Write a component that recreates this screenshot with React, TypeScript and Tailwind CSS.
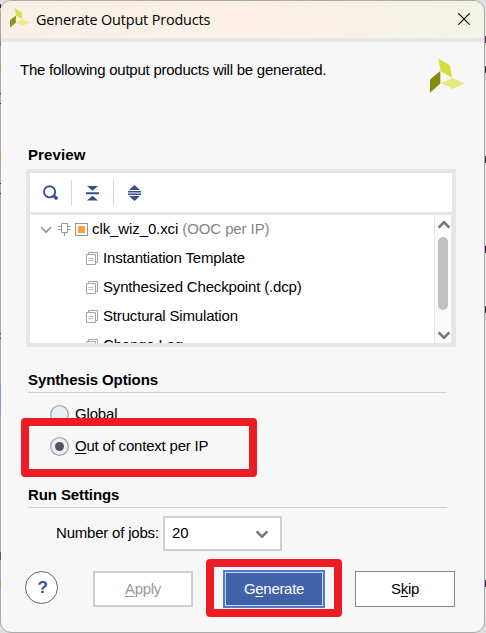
import type { ReactNode } from "react";

function Logo({ className, soft }: { className: string; soft?: boolean }) {
  return (
    <svg className={className} viewBox="0 0 35 35" opacity={soft ? 0.9 : 1}>
      <path d="M8.3 0.3 L20 7.6 L22 20 L10.7 13 Z" fill="#d5e03a" />
      <path d="M0 21.6 L10.3 13 L10.3 25.6 L0 34.7 Z" fill="#878a0c" />
      <path d="M11 25.3 L22.3 20 L34.5 25.3 L23 31 Z" fill="#e4eb7c" />
    </svg>
  );
}

function Chevron({ className, up }: { className: string; up?: boolean }) {
  return (
    <svg className={className} viewBox="0 0 14 9" fill="none" stroke="#777" strokeWidth="2.7">
      <path d={up ? "M1.6 7.6 L7 2.3 L12.4 7.6" : "M1.6 1.4 L7 6.7 L12.4 1.4"} />
    </svg>
  );
}

function Pages() {
  return (
    <svg className="mr-[5px] h-[13px] w-3 shrink-0" viewBox="0 0 12 13" fill="none" stroke="#a3a3a3">
      <path d="M2.5 2.5 V0.5 H11.5 V10.5 H9.5" />
      <path d="M0.5 2.5 H9.5 V12.5 H0.5 Z" fill="#fff" />
      <path d="M2.5 6.5 H7.5 M2.5 8.5 H7.5" stroke="#bdbdbd" />
    </svg>
  );
}

function Heading({ children }: { children: ReactNode }) {
  return (
    <div className="h-[23px] w-[419px] border-b border-[#cfcfcf] text-[15px] leading-[20px] font-bold tracking-[-0.1px]">
      {children}
    </div>
  );
}

function Radio({ on }: { on?: boolean }) {
  return (
    <svg className="mr-1.5 h-[19px] w-[19px]" viewBox="0 0 19 19">
      <circle cx="9.5" cy="9.5" r="8.8" fill="#e7effc" stroke="#a6a6a6" strokeWidth="1.3" />
      {on && <circle cx="9.5" cy="9.5" r="4.5" fill="#555" />}
    </svg>
  );
}

const files = ["Instantiation Template", "Synthesized Checkpoint (.dcp)", "Structural Simulation", "Change Log"];

const leftMarks = [
  { y: 4, h: 4, color: "#2b3560" },
  { y: 34, h: 7, color: "#c99a4c" },
  { y: 41, h: 5, color: "#858585" },
  { y: 64, h: 7, color: "#c99a4c" },
  { y: 93, h: 1, color: "#333" },
  { y: 103, h: 1, color: "#333" },
  { y: 154, h: 7, color: "#c99a4c" },
  { y: 183, h: 1, color: "#333" },
  { y: 193, h: 1, color: "#333" },
  { y: 333, h: 1, color: "#333" },
  { y: 338, h: 1, color: "#333" },
  { y: 384, h: 31, color: "#8d9dc0" },
  { y: 552, h: 8, color: "#4a6573" },
  { y: 582, h: 4, color: "#c98f4c" },
];

const rightMarks = [36, 66, 156, 246, 306, 580];

export default function App() {
  return (
    <div className="relative h-[633px] w-[486px] overflow-hidden bg-[#dedede] font-['Liberation_Sans',Arial,sans-serif] text-[15px] tracking-[-0.17px] text-black">
      <div className="flex h-[633px] w-[485px] flex-col overflow-hidden rounded-[11px] border border-[#aaa] bg-[#f7f7f7]">
        <header className="flex h-[37px] shrink-0 items-center bg-linear-to-r from-[#f8f0e7] via-[#fbf0e3] to-[#f3f3e7] pl-[9px]">
          <Logo className="mb-[3px] h-5 w-5" soft />
          <span className="ml-[6px] font-['Open_Sans','Noto_Sans',sans-serif] text-[14.4px] tracking-[-0.14px] whitespace-nowrap">
            Generate Output Products
          </span>
          <svg className="mr-[14px] mb-px ml-auto h-3 w-3" viewBox="0 0 12 12" stroke="#111" strokeWidth="1.2">
            <path d="M0.3 0.3 L11.7 11.7 M11.7 0.3 L0.3 11.7" />
          </svg>
        </header>
        <div className="h-1 shrink-0 bg-[#e7e7e7]" />

        <main className="flex flex-col pl-[27px]">
          <div className="-ml-2 flex h-[103px] justify-between">
            <p className="pt-[18px] leading-[20px] tracking-[-0.24px] whitespace-nowrap">
              The following output products will be generated.
            </p>
            <Logo className="mt-4 mr-[19px] h-[35px] w-[35px]" />
          </div>
          <h2 className="h-[24px] text-[15px] leading-[20px] font-bold tracking-[0.1px]">Preview</h2>

          <section className="-ml-[2px] flex h-[178px] w-[430px] flex-col border-4 border-[#e6e6e6] bg-white">
            <div className="flex h-[42px] shrink-0 items-center border-b-3 border-[#e6e6e6] pl-[13px]">
              <svg className="h-4 w-4" viewBox="0 0 16 16" fill="none" stroke="#33518c">
                <circle cx="6.6" cy="6.8" r="5.6" strokeWidth="1.9" />
                <path d="M11.2 11.2 L14.2 14.2" strokeWidth="3.2" />
              </svg>
              <span className="ml-3 h-[25px] w-px bg-[#d7d7d7]" />
              <svg className="ml-[14px] h-4 w-[13px]" viewBox="0 0 13 16" fill="#33518c">
                <path d="M1 1 H12 L6.5 5.7 Z M1 15.5 H12 L6.5 10.8 Z M0 7.2 H13 V9.2 H0 Z" />
              </svg>
              <span className="ml-[14px] h-[25px] w-px bg-[#d7d7d7]" />
              <svg className="ml-[14px] h-4 w-[13px]" viewBox="0 0 13 16" fill="#33518c">
                <path d="M1 5 L6.5 0 L12 5 Z M1 11 L6.5 16 L12 11 Z M0 6 H13 V7.5 H0 Z M0 8.5 H13 V10 H0 Z" />
              </svg>
            </div>
            <div className="flex h-[128px]">
              <div className="h-full w-[404px] overflow-hidden">
                <div className="flex h-[29px] items-center whitespace-nowrap">
                  <svg className="ml-[10px] h-[8px] w-3" viewBox="0 0 12 8" fill="none" stroke="#999" strokeWidth="1.7">
                    <path d="M1 1 L6 6.2 L11 1" />
                  </svg>
                  <svg className="ml-[6px] h-[13px] w-[13px]" viewBox="0 0 13 13" fill="none" stroke="#969696">
                    <path d="M3.5 0.5 H9.5 V9.5 H3.5 Z M0 3.5 H3.5 M0 6.5 H3.5 M9.5 3.5 H13 M9.5 6.5 H13 M6.5 9.5 V13" />
                  </svg>
                  <span className="ml-1 flex h-[13px] w-[13px] items-center justify-center border border-[#969696]">
                    <span className="h-[7px] w-[7px] bg-[#ff9f35]" />
                  </span>
                  <span className="ml-1 tracking-[-0.1px]">
                    clk_wiz_0.xci <span className="text-[#858585]">(OOC per IP)</span>
                  </span>
                </div>
                {files.map((name) => (
                  <div key={name} className="flex h-[29px] items-center pl-14 whitespace-nowrap">
                    <Pages />
                    {name}
                  </div>
                ))}
              </div>
              <div className="flex w-[18px] flex-col items-center border-r border-l border-r-[#e6e6e6] border-l-[#e6e6e6] bg-[#fafafa]">
                <Chevron up className="mt-[5px] ml-[2px] h-[9px] w-3.5" />
                <span className="mt-2 h-[73px] w-[10px] rounded-full bg-[#c1c1c1]" />
                <Chevron className="mt-[21px] ml-[2px] h-[9px] w-3.5" />
              </div>
            </div>
          </section>

          <div className="mt-[23px]">
            <Heading>Synthesis Options</Heading>
          </div>
          <div className="mt-[5px] flex h-8 items-center pl-[22px]">
            <Radio />
            Global
          </div>
          <div className="flex h-8 items-center pl-[22px]">
            <Radio on />
            <span className="tracking-[-0.2px]">
              <u className="underline-offset-2">O</u>ut of context per IP
            </span>
          </div>
          <div className="mt-[23px]">
            <Heading>Run Settings</Heading>
          </div>
          <div className="mt-2 flex h-[35px] items-center pl-7">
            <span className="w-[107px] tracking-[-0.2px] whitespace-nowrap">Number of jobs:</span>
            <div className="flex h-[35px] w-[119px] items-center justify-between border-2 border-[#cfcfcf] bg-white pr-[11px] pl-[7px]">
              20
              <Chevron className="mt-px h-[9px] w-3.5" />
            </div>
          </div>
        </main>

        <footer className="mt-[19px] flex h-[38px] items-center pl-6">
          <span className="mb-1 flex h-[33px] w-[33px] items-center justify-center rounded-full border border-[#666] bg-white pt-0.5 pl-0.5 text-[17px] font-bold text-[#33518c]">
            ?
          </span>
          <button className="ml-[35px] h-9 w-[100px] border-2 border-[#cfcfcf] bg-white tracking-[-0.3px] text-[#999]">
            <u className="underline-offset-2">A</u>pply
          </button>
          <button className="ml-[30px] h-[38px] w-[102px] border-2 border-[#4c7bd0] bg-[#c7d5ef] p-px tracking-[-0.3px] text-white">
            <span className="flex h-full items-center justify-center bg-[#4062a8]">
              G<u className="underline-offset-2">e</u>nerate
            </span>
          </button>
          <button className="ml-[30px] h-9 w-[100px] border-[1.5px] border-[#888] bg-white tracking-[-0.3px]">
            S<u className="underline-offset-2">k</u>ip
          </button>
        </footer>
      </div>

      {leftMarks.map((m) => (
        <span key={m.y} className="absolute left-0 w-px" style={{ top: m.y, height: m.h, background: m.color }} />
      ))}
      {rightMarks.map((y) => (
        <span key={y} className="absolute right-0 h-[7px] w-px bg-[#4b2a4d]" style={{ top: y }} />
      ))}

      <div className="absolute top-[418px] left-[21px] h-[59px] w-[236px] rounded-[4px] border-8 border-[#ed1c24]" />
      <div className="absolute top-[559px] left-[206px] h-[58px] w-[136px] rounded-[4px] border-8 border-[#ed1c24]" />
    </div>
  );
}
